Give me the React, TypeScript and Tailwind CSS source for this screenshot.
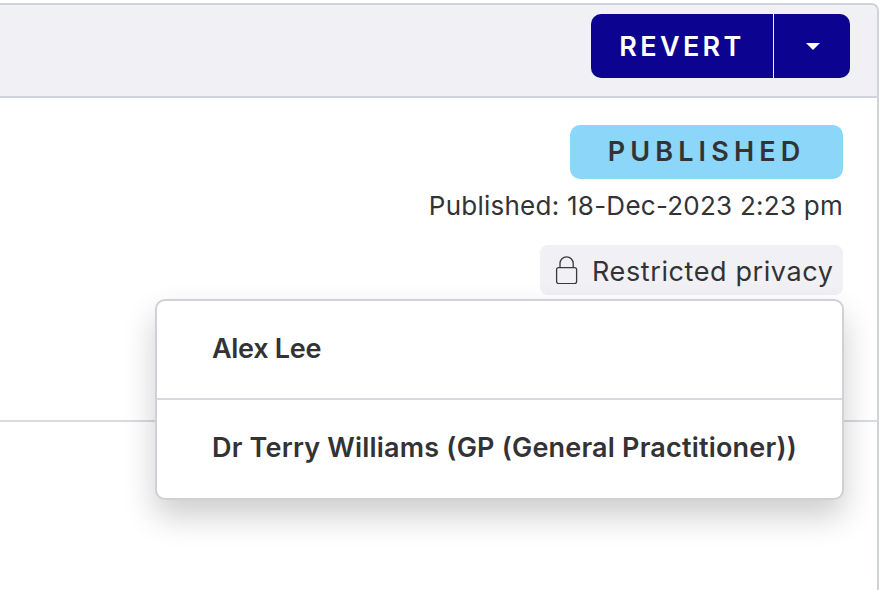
const RECIPIENTS = ['Alex Lee', 'Dr Terry Williams (GP (General Practitioner))']

function LockIcon() {
  return (
    <svg width="24" height="28" viewBox="0 0 24 28" fill="none" stroke="#3a3a3c" strokeWidth="1.3">
      <rect x="2.6" y="11.6" width="20" height="16" rx="2" />
      <path d="M6 11.5V7.5a6.6 6.6 0 0 1 13.2 0v4" />
    </svg>
  )
}

export default function App() {
  return (
    <div className="w-[882px] h-[590px] overflow-hidden bg-white pt-[3px] pr-[3px] text-[#333335] font-['Inter',sans-serif]">
      <div className="h-[600px] border-t-2 border-r-2 border-[#d0d3da] rounded-tr-lg">
        <header className="h-[93px] flex justify-end items-start pt-[9px] pr-[27px] bg-[#f0f0f5] border-b-2 border-[#d0d3da] rounded-tr-lg">
          <div className="w-[259px] h-[64px] flex rounded-[10px] bg-[#0c0491] text-white">
            <button className="w-[183px] pt-[3px] border-r border-[#eeeef6] text-[27px] font-semibold tracking-[0.125em]">
              REVERT
            </button>
            <button className="flex-1 flex items-center justify-center pl-[2px]" aria-label="More">
              <span className="w-0 h-0 border-x-[7px] border-x-transparent border-t-[7px] border-t-white" />
            </button>
          </div>
        </header>

        <section className="relative h-[324px] border-b-2 border-[#d8dade] pt-[27px] pr-[34px] flex flex-col items-end">
          <div className="w-[273px] h-[54px] flex items-center justify-center rounded-[10px] bg-[#8cd6f9] text-[27px] font-semibold tracking-[0.19em]">
            PUBLISHED
          </div>
          <p className="mt-[9px] text-[26px] leading-[36px] tracking-[0.25px]">Published: 18-Dec-2023 2:23 pm</p>
          <div className="mt-[21px] w-[303px] h-[50px] flex items-center gap-[14px] pl-[14px] rounded-lg bg-[#f0f0f5] text-[27px] tracking-[0.6px]">
            <LockIcon />
            <span className="pt-[4px]">Restricted privacy</span>
          </div>

          <div className="absolute left-[155px] top-[201px] w-[689px] h-[201px] bg-white border-2 border-[#d0d1d5] rounded-[10px] shadow-[0_16px_32px_rgba(0,0,0,0.2)]">
            {RECIPIENTS.map((name, i) => (
              <div
                key={name}
                className={`flex items-center pl-[55px] text-[27px] font-semibold ${i === 0 ? 'h-[99px] border-b-2 border-[#d8dade] tracking-[-0.3px]' : 'h-[97px] tracking-[0.2px]'}`}
              >
                {name}
              </div>
            ))}
          </div>
        </section>
      </div>
    </div>
  )
}
